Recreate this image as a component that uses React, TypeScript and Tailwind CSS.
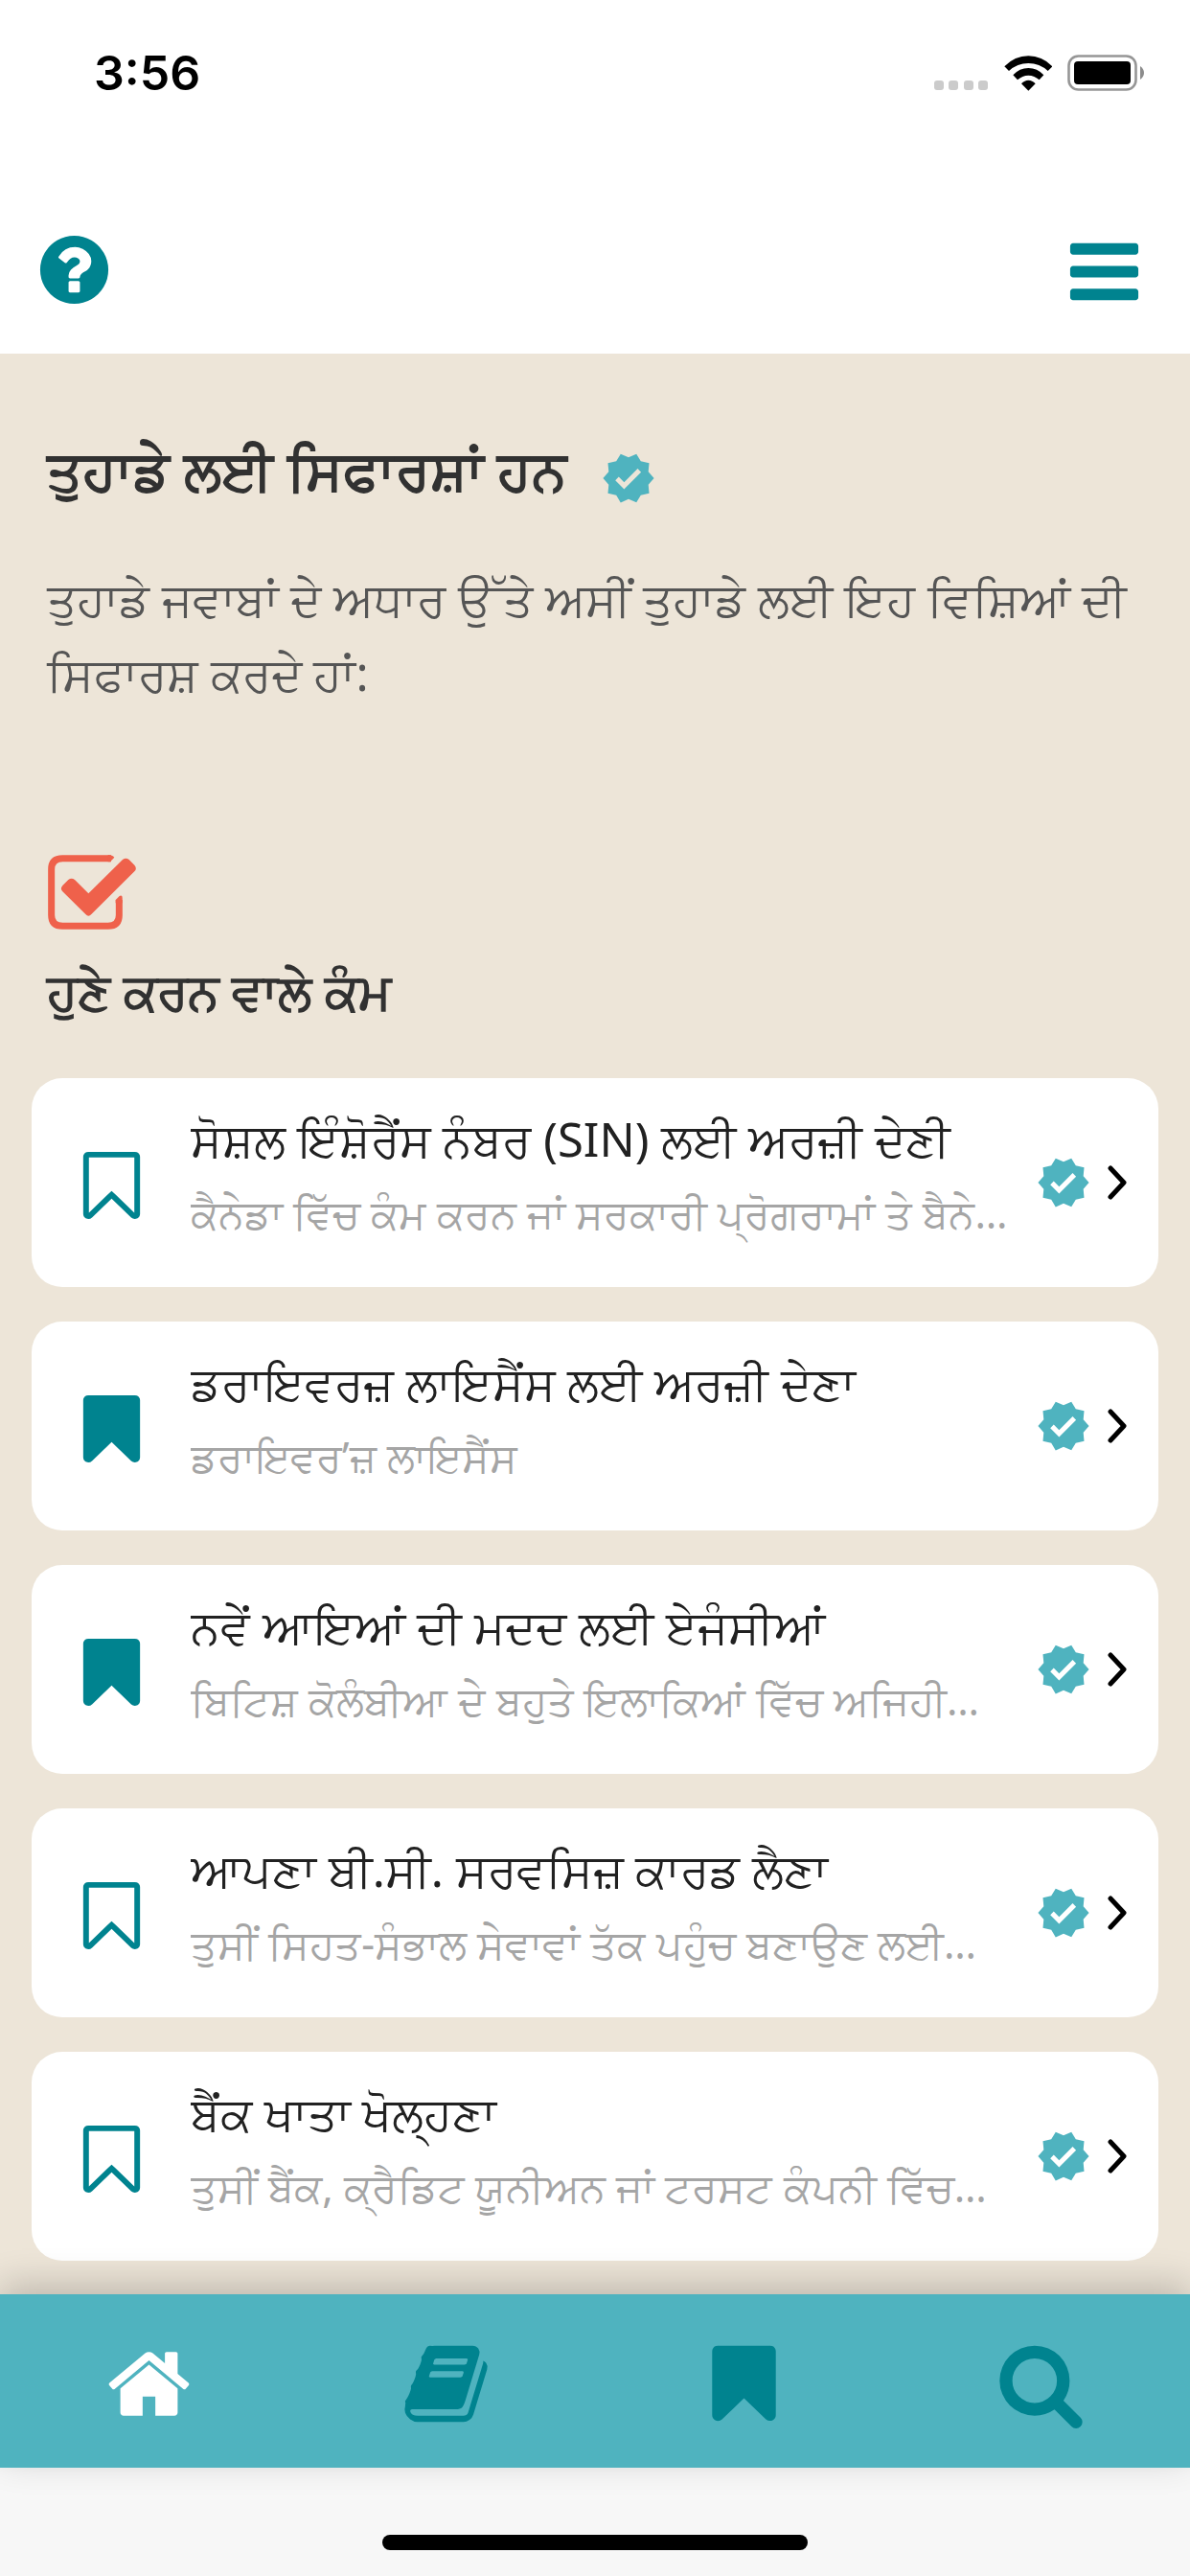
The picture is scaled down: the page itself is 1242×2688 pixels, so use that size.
import { MdVerified } from "react-icons/md";

type Topic = { title: string; summary: string; saved: boolean };

const topics: Topic[] = [
  {
    title: "ਸੋਸ਼ਲ ਇੰਸ਼ੋਰੈਂਸ ਨੰਬਰ (SIN) ਲਈ ਅਰਜ਼ੀ ਦੇਣੀ",
    summary: "ਕੈਨੇਡਾ ਵਿੱਚ ਕੰਮ ਕਰਨ ਜਾਂ ਸਰਕਾਰੀ ਪ੍ਰੋਗਰਾਮਾਂ ਤੇ ਬੈਨੇ…",
    saved: false,
  },
  {
    title: "ਡਰਾਇਵਰਜ਼ ਲਾਇਸੈਂਸ ਲਈ ਅਰਜ਼ੀ ਦੇਣਾ",
    summary: "ਡਰਾਇਵਰ’ਜ਼ ਲਾਇਸੈਂਸ",
    saved: true,
  },
  {
    title: "ਨਵੇਂ ਆਇਆਂ ਦੀ ਮਦਦ ਲਈ ਏਜੰਸੀਆਂ",
    summary: "ਬਿਟਿਸ਼ ਕੋਲੰਬੀਆ ਦੇ ਬਹੁਤੇ ਇਲਾਕਿਆਂ ਵਿੱਚ ਅਜਿਹੀ…",
    saved: true,
  },
  {
    title: "ਆਪਣਾ ਬੀ.ਸੀ. ਸਰਵਸਿਜ਼ ਕਾਰਡ ਲੈਣਾ",
    summary: "ਤੁਸੀਂ ਸਿਹਤ-ਸੰਭਾਲ ਸੇਵਾਵਾਂ ਤੱਕ ਪਹੁੰਚ ਬਣਾਉਣ ਲਈ…",
    saved: false,
  },
  {
    title: "ਬੈਂਕ ਖਾਤਾ ਖੋਲ੍ਹਣਾ",
    summary: "ਤੁਸੀਂ ਬੈਂਕ, ਕ੍ਰੈਡਿਟ ਯੂਨੀਅਨ ਜਾਂ ਟਰਸਟ ਕੰਪਨੀ ਵਿੱਚ…",
    saved: false,
  },
];

const icons = {
  help: "M1024 1376v-192q0-14-9-23t-23-9h-192q-14 0-23 9t-9 23v192q0 14 9 23t23 9h192q14 0 23-9t9-23zm256-672q0-88-55.5-163t-138.5-116-170-41q-243 0-371 213-15 24 8 42l132 100q7 6 19 6 16 0 25-12 53-68 86-92 34-24 86-24 48 0 85.5 26t37.5 59q0 38-20 61t-68 45q-63 28-115.5 86.5t-52.5 125.5v36q0 14 9 23t23 9h192q14 0 23-9t9-23q0-19 21.5-49.5t54.5-49.5q32-18 49-28.5t46-35 44.5-48 28-60.5 12.5-81zm384 192q0 209-103 385.5t-279.5 279.5-385.5 103-385.5-103-279.5-279.5-103-385.5 103-385.5 279.5-279.5 385.5-103 385.5 103 279.5 279.5 103 385.5z",
  menu: "M1664 1344v128q0 26-19 45t-45 19h-1408q-26 0-45-19t-19-45v-128q0-26 19-45t45-19h1408q26 0 45 19t19 45zm0-512v128q0 26-19 45t-45 19h-1408q-26 0-45-19t-19-45v-128q0-26 19-45t45-19h1408q26 0 45 19t19 45zm0-512v128q0 26-19 45t-45 19h-1408q-26 0-45-19t-19-45v-128q0-26 19-45t45-19h1408q26 0 45 19t19 45z",
  home: "M1472 992v480q0 26-19 45t-45 19h-384v-384h-256v384h-384q-26 0-45-19t-19-45v-480q0-1 .5-3t.5-3l575-474 575 474q1 2 1 6zm223-69l-62 74q-8 9-21 11h-3q-13 0-21-7l-692-577-692 577q-12 8-24 7-13-2-21-11l-62-74q-8-10-7-23.5t11-21.5l719-599q32-26 76-26t76 26l244 204v-195q0-14 9-23t23-9h192q14 0 23 9t9 23v408l219 182q10 8 11 21.5t-7 23.5z",
  book: "M1703 478q40 57 18 129l-275 906q-19 64-76.5 107.5t-122.5 43.5h-923q-77 0-148.5-53.5t-99.5-131.5q-24-67-2-127 0-4 3-27t4-37q1-8-3-21.5t-3-19.5q2-11 8-21t16.5-23.5 16.5-23.5q23-38 45-91.5t30-91.5q3-10 .5-30t-.5-28q3-11 17-28t17-23q21-36 42-92t25-90q1-9-2.5-32t.5-28q4-13 22-30.5t22-22.5q19-26 42.5-84.5t27.5-96.5q1-8-3-25.5t-2-26.5q2-8 9-18t18-23 17-21q8-12 16.5-30.5t15-35 16-36 19.5-32 26.5-23.5 36-11.5 47.5 5.5l-1 3q38-9 51-9h761q74 0 114 56t18 130l-274 906q-36 119-71.5 153.5t-128.5 34.5h-869q-27 0-38 15-11 16-1 43 24 70 144 70h923q29 0 56-15.5t35-41.5l300-987q7-22 5-57 38 15 59 43zm-1064 2q-4 13 2 22.5t20 9.5h608q13 0 25.5-9.5t16.5-22.5l21-64q4-13-2-22.5t-20-9.5h-608q-13 0-25.5 9.5t-16.5 22.5zm-83 256q-4 13 2 22.5t20 9.5h608q13 0 25.5-9.5t16.5-22.5l21-64q4-13-2-22.5t-20-9.5h-608q-13 0-25.5 9.5t-16.5 22.5z",
  bookmark:
    "M1420 128q23 0 44 9 33 13 52.5 41t19.5 62v1289q0 34-19.5 62t-52.5 41q-19 8-44 8-48 0-83-32l-441-424-441 424q-36 33-83 33-23 0-44-9-33-13-52.5-41t-19.5-62v-1289q0-34 19.5-62t52.5-41q21-9 44-9h1048z",
  bookmarkOutline:
    "M1408 256h-1024v1242l423-406 89-85 89 85 423 406v-1242zm12-128q23 0 44 9 33 13 52.5 41t19.5 62v1289q0 34-19.5 62t-52.5 41q-19 8-44 8-48 0-83-32l-441-424-441 424q-36 33-83 33-23 0-44-9-33-13-52.5-41t-19.5-62v-1289q0-34 19.5-62t52.5-41q21-9 44-9h1048z",
  search:
    "M1216 832q0-185-131.5-316.5t-316.5-131.5-316.5 131.5-131.5 316.5 131.5 316.5 316.5 131.5 316.5-131.5 131.5-316.5zm512 832q0 52-38 90t-90 38q-54 0-90-38l-343-342q-179 124-399 124-143 0-273.5-55.5t-225-150-150-225-55.5-273.5 55.5-273.5 150-225 225-150 273.5-55.5 273.5 55.5 225 150 150 225 55.5 273.5q0 220-124 399l343 343q37 37 37 90z",
};

function Icon({ name, className }: { name: keyof typeof icons; className: string }) {
  return (
    <svg viewBox="0 0 1792 1792" fill="currentColor" aria-hidden="true" className={className}>
      <path d={icons[name]} />
    </svg>
  );
}

function StatusBar() {
  return (
    <div className="flex h-[152px] items-center justify-between pr-[47px] pl-[98px]">
      <time className="font-['Inter',sans-serif] text-[50px] leading-none font-semibold text-black">3:56</time>
      <div className="flex items-center gap-4">
        <svg viewBox="0 0 57 38" className="h-[38px] w-[57px]" fill="#cbcbcb" aria-hidden="true">
          <rect x="0" y="27" width="10" height="10" rx="3" />
          <rect x="15" y="27" width="10" height="10" rx="3" />
          <rect x="31" y="27" width="10" height="10" rx="3" />
          <rect x="46" y="27" width="10" height="10" rx="3" />
        </svg>
        <svg viewBox="320 81 150 111" className="h-[37px] w-[50px]" aria-hidden="true">
          <path d="M321 115 Q353 82 396 82 T471 115 L457 129 Q431 105 396 105 T335 129Z" />
          <path d="M348 142 Q368 120 396 120 T444 142 L430 157 Q415 143 396 143 T362 157Z" />
          <path d="M374 169 Q384 158 396 158 T418 169 L396 191Z" />
        </svg>
        <svg viewBox="0 0 81 38" className="h-[38px] w-[81px]" aria-hidden="true">
          <rect x="1.5" y="1.5" width="70" height="35" rx="10" fill="none" stroke="#969696" strokeWidth="2.6" />
          <rect x="7" y="7" width="59" height="24" rx="4" />
          <path d="M76 12 Q80 15 80 19 T76 26Z" fill="#8c8c8c" />
        </svg>
      </div>
    </div>
  );
}

function CheckboxArt() {
  return (
    <svg viewBox="147 96 282 240" className="h-20 w-[94px]" fill="#ef614b" aria-hidden="true">
      <path d="M348 110 H196 Q161 110 161 144 V288 Q161 322 196 322 H338 Q373 322 373 288 V240" fill="none" stroke="#ef614b" strokeWidth="21" />
      <path d="M338 99 Q352 99 358 107 L345 121 H338Z" />
      <path d="M362 250 V240 L374 228 Q383 224 383 234 V250Z" />
      <path d="M214 177 Q224 169 234 177 L277 220 L384 114 Q394 106 404 114 L421 131 Q430 142 421 151 L286 285 Q277 295 268 285 L196 214 Q187 205 196 195Z" />
    </svg>
  );
}

function TopicCard({ topic }: { topic: Topic }) {
  return (
    <li className="flex h-[218px] items-center rounded-[32px] bg-white pr-[30px]">
      <button
        type="button"
        aria-label="ਬੁੱਕਮਾਰਕ"
        aria-pressed={topic.saved}
        className="flex w-[166px] shrink-0 justify-center pt-1.5 text-[#00838f]"
      >
        <Icon name={topic.saved ? "bookmark" : "bookmarkOutline"} className="size-[83px]" />
      </button>
      <a href="#" className="flex min-w-0 flex-1 items-center">
        <span className="flex min-w-0 flex-1 flex-col pb-4">
          <span className="truncate text-[49px] leading-[80px] text-[#212121]">{topic.title}</span>
          <span className="truncate text-[43px] leading-[76px] text-[#a5a5a5]">{topic.summary}</span>
        </span>
        <MdVerified className="size-[58px] shrink-0 text-[#4fb3bf]" />
        <svg viewBox="0 0 24 36" className="ml-4 h-9 w-6 shrink-0" fill="none" stroke="#000" strokeWidth="5" strokeLinecap="round" strokeLinejoin="round" aria-hidden="true">
          <path d="M4 3 L18 18 L4 33" />
        </svg>
      </a>
    </li>
  );
}

export default function App() {
  return (
    <div lang="pa" className="flex min-h-screen flex-col bg-white font-['Noto_Sans',sans-serif]">
      <StatusBar />
      <header className="flex h-[217px] items-start justify-between px-9 pt-[88px] text-[#00838f]">
        <button type="button" aria-label="ਮਦਦ">
          <Icon name="help" className="size-[83px]" />
        </button>
        <button type="button" aria-label="ਮੀਨੂ" className="pt-0.5 pr-3">
          <Icon name="menu" className="size-[83px]" />
        </button>
      </header>

      <main className="flex-1 bg-[#ede5d8] px-[33px]">
        <section className="px-4 pt-20">
          <div className="flex items-center gap-9">
            <h1 className="text-[58px] leading-[80px] font-bold text-[#313131]">ਤੁਹਾਡੇ ਲਈ ਸਿਫਾਰਸ਼ਾਂ ਹਨ</h1>
            <MdVerified className="mt-5 size-[58px] text-[#4fb3bf]" />
          </div>
          <p className="mt-14 text-[49px] leading-[78px] text-[#555555]">
            ਤੁਹਾਡੇ ਜਵਾਬਾਂ ਦੇ ਅਧਾਰ ਉੱਤੇ ਅਸੀਂ ਤੁਹਾਡੇ ਲਈ ਇਹ ਵਿਸ਼ਿਆਂ ਦੀ ਸਿਫਾਰਸ਼ ਕਰਦੇ ਹਾਂ:
          </p>
        </section>

        <section className="pt-[150px]">
          <div className="px-4">
            <CheckboxArt />
            <h2 className="mt-[22px] text-[52px] leading-[80px] font-bold text-[#313131]">ਹੁਣੇ ਕਰਨ ਵਾਲੇ ਕੰਮ</h2>
          </div>
          <ul className="mt-[52px] flex flex-col gap-9">
            {topics.map((topic) => (
              <TopicCard key={topic.title} topic={topic} />
            ))}
          </ul>
        </section>
      </main>

      <nav className="z-10 grid h-[181px] grid-cols-4 bg-[#4fb3bf] pt-1.5 text-[#00838f] shadow-[0_-10px_36px_rgba(0,0,0,0.2)]">
        <a href="#" aria-label="ਘਰ" aria-current="page" className="flex items-center justify-center text-white">
          <Icon name="home" className="size-[93px]" />
        </a>
        <a href="#" aria-label="ਵਿਸ਼ੇ" className="flex items-center justify-center">
          <Icon name="book" className="size-[93px]" />
        </a>
        <a href="#" aria-label="ਬੁੱਕਮਾਰਕ" className="flex items-center justify-center">
          <Icon name="bookmark" className="size-[93px]" />
        </a>
        <a href="#" aria-label="ਖੋਜ" className="flex items-center justify-center">
          <Icon name="search" className="size-[93px]" />
        </a>
      </nav>
      <div className="flex h-[113px] items-end justify-center bg-[#f7f7f7] pb-[27px]">
        <div className="h-4 w-[444px] rounded-full bg-black" />
      </div>
    </div>
  );
}
